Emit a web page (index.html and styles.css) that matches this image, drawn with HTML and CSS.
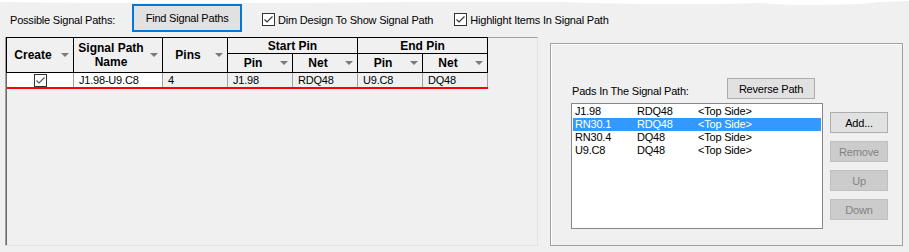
FILE: index.html
```html
<!DOCTYPE html>
<html lang="en">
<head>
    <meta charset="UTF-8">
    <title>Signal Paths</title>
    <link rel="stylesheet" href="styles.css">
</head>
<body>
    <svg class="torn-edge" width="909" height="6" viewBox="0 0 909 6">
        <polygon points="0,0 909,0 909,1 880,2 860,4 820,5 790,5 760,3 720,4 640,4 590,3 560,2 420,2 300,3 180,3 90,3 0,2" fill="#ffffff"/>
    </svg>

    <div class="toolbar">
        <span class="label">Possible Signal Paths:</span>
        <button class="btn btn-focus">Find Signal Paths</button>
        <label class="check first-check">
            <svg class="box" width="13" height="13" viewBox="0 0 13 13"><rect x="0.5" y="0.5" width="12" height="12" fill="#fff" stroke="#333"/><path d="M2.5 6.5 L5 9 L10.5 3.5" fill="none" stroke="#333" stroke-width="1.2"/></svg>
            <span>Dim Design To Show Signal Path</span>
        </label>
        <label class="check second-check">
            <svg class="box" width="13" height="13" viewBox="0 0 13 13"><rect x="0.5" y="0.5" width="12" height="12" fill="#fff" stroke="#333"/><path d="M2.5 6.5 L5 9 L10.5 3.5" fill="none" stroke="#333" stroke-width="1.2"/></svg>
            <span>Highlight Items In Signal Path</span>
        </label>
    </div>

    <div class="main">
        <div class="grid-panel">
            <table class="grid">
                <colgroup>
                    <col style="width: 67px">
                    <col style="width: 89px">
                    <col style="width: 65px">
                    <col style="width: 65px">
                    <col style="width: 65px">
                    <col style="width: 65px">
                    <col style="width: 65px">
                </colgroup>
                <thead>
                    <tr class="head-top">
                        <th rowspan="2"><div class="hcell"><span class="htext">Create</span><span class="arrow"></span></div></th>
                        <th rowspan="2"><div class="hcell"><span class="htext">Signal Path<br>Name</span><span class="arrow"></span></div></th>
                        <th rowspan="2"><div class="hcell"><span class="htext">Pins</span><span class="arrow"></span></div></th>
                        <th colspan="2" class="group">Start Pin</th>
                        <th colspan="2" class="group">End Pin</th>
                    </tr>
                    <tr class="head-sub">
                        <th><div class="hcell"><span class="htext">Pin</span><span class="arrow"></span></div></th>
                        <th><div class="hcell"><span class="htext">Net</span><span class="arrow"></span></div></th>
                        <th><div class="hcell"><span class="htext">Pin</span><span class="arrow"></span></div></th>
                        <th><div class="hcell"><span class="htext">Net</span><span class="arrow"></span></div></th>
                    </tr>
                </thead>
                <tbody>
                    <tr class="row">
                        <td class="cell-white cell-check">
                            <svg width="13" height="13" viewBox="0 0 13 13"><rect x="0.5" y="0.5" width="12" height="12" fill="#fff" stroke="#333"/><path d="M2.5 6.5 L5 9 L10.5 3.5" fill="none" stroke="#555" stroke-width="1.1"/></svg>
                        </td>
                        <td class="cell-white">J1.98-U9.C8</td>
                        <td>4</td>
                        <td>J1.98</td>
                        <td>RDQ48</td>
                        <td>U9.C8</td>
                        <td>DQ48</td>
                    </tr>
                </tbody>
            </table>
        </div>

        <div class="groupbox">
            <div class="pads-head">
                <span class="label">Pads In The Signal Path:</span>
                <button class="btn btn-reverse">Reverse Path</button>
            </div>
            <div class="pads-body">
                <div class="listbox">
                    <div class="item"><span>J1.98</span><span>RDQ48</span><span>&lt;Top Side&gt;</span></div>
                    <div class="item selected"><span>RN30.1</span><span>RDQ48</span><span>&lt;Top Side&gt;</span></div>
                    <div class="item"><span>RN30.4</span><span>DQ48</span><span>&lt;Top Side&gt;</span></div>
                    <div class="item"><span>U9.C8</span><span>DQ48</span><span>&lt;Top Side&gt;</span></div>
                </div>
                <div class="side-buttons">
                    <button class="btn btn-side">Add...</button>
                    <button class="btn btn-side" disabled>Remove</button>
                    <button class="btn btn-side" disabled>Up</button>
                    <button class="btn btn-side" disabled>Down</button>
                </div>
            </div>
        </div>
    </div>
</body>
</html>
```

FILE: styles.css
```css
body {
    margin: 0;
    background: #f0f0f0;
    font-family: "Liberation Sans", Arial, sans-serif;
    font-size: 11px;
    letter-spacing: -0.2px;
    color: #000;
    width: 909px;
    height: 252px;
    overflow: hidden;
    position: relative;
}
.torn-edge {
    position: absolute;
    top: 0;
    left: 0;
}
.btn {
    font-family: inherit;
    font-size: 11px;
    letter-spacing: -0.2px;
    color: #000;
    background: #e1e1e1;
    border: 1px solid #adadad;
    padding: 0;
    margin: 0;
    cursor: pointer;
}
.btn:disabled {
    background: #cccccc;
    border-color: #bfbfbf;
    color: #838383;
    cursor: default;
}

/* top bar */
.toolbar {
    height: 37px;
    display: flex;
    align-items: center;
    padding-left: 10px;
    box-sizing: border-box;
    padding-top: 2px;
}
.btn-focus {
    margin-left: 17px;
    width: 110px;
    height: 28px;
    border: 2px solid #0078d7;
    margin-top: -4px;
}
.check {
    display: flex;
    align-items: center;
    gap: 3px;
}
.check .box {
    display: block;
}
.first-check {
    margin-left: 20px;
}
.second-check {
    margin-left: 21px;
}

/* main area */
.main {
    display: flex;
    align-items: flex-start;
    padding-left: 5px;
}
.grid-panel {
    width: 533px;
    height: 209px;
    box-sizing: border-box;
    border-left: 1px solid #a0a0a0;
    border-top: 1px solid #a0a0a0;
    border-right: 1px solid #e3e3e3;
    border-bottom: 1px solid #e3e3e3;
    box-shadow: inset 1px 0 0 #696969;
}
.grid {
    border-collapse: collapse;
    table-layout: fixed;
    width: 481px;
    margin-top: -1px;
}
.grid th {
    border: 1px solid #000;
    padding: 0;
    font-weight: bold;
    font-size: 12px;
    letter-spacing: 0;
    background: #f0f0f0;
    line-height: 14px;
}
.head-top th {
    height: 15px;
}
.head-top th.group {
    text-align: center;
}
.head-sub th {
    height: 18px;
}
.hcell {
    display: flex;
    align-items: center;
}
.htext {
    flex: 1;
    text-align: center;
}
.arrow {
    width: 0;
    height: 0;
    border-left: 4px solid transparent;
    border-right: 4px solid transparent;
    border-top: 4px solid #7a7a7a;
    margin-right: 4px;
    margin-left: 2px;
}
.row td {
    height: 14px;
    padding: 0 0 0 5px;
    border-left: 1px solid #a0a0a0;
    border-right: 1px solid #a0a0a0;
    border-bottom: 2px solid #ff0000;
    white-space: nowrap;
    line-height: 14px;
    background: #f0f0f0;
}
.row td.cell-white {
    background: #fff;
}
.row td.cell-check {
    text-align: center;
    padding: 0;
    border-left: none;
}
.cell-check svg {
    display: block;
    margin: 0 auto;
    position: relative;
    left: 1px;
}

/* right group */
.groupbox {
    margin-left: 12px;
    margin-top: 6px;
    width: 353px;
    height: 203px;
    box-sizing: border-box;
    border: 1px solid #a0a0a0;
    box-shadow: inset 1px 1px 0 #fff;
    padding: 34px 0 0 20px;
}
.pads-head {
    width: 252px;
    display: flex;
    align-items: center;
    height: 21px;
}
.pads-head .label {
    margin-left: 1px;
    margin-top: 4px;
}
.btn-reverse {
    margin-left: auto;
    margin-right: 8px;
    width: 88px;
    height: 21px;
}
.pads-body {
    display: flex;
    margin-top: 4px;
}
.listbox {
    width: 252px;
    height: 126px;
    box-sizing: border-box;
    border: 1px solid #828790;
    background: #fff;
    padding: 1px;
}
.item {
    display: grid;
    grid-template-columns: 62px 61px auto;
    height: 13px;
    line-height: 13px;
    padding-left: 2px;
    white-space: nowrap;
}
.item.selected {
    background: #3399ff;
    color: #fff;
}
.side-buttons {
    display: flex;
    flex-direction: column;
    gap: 8px;
    margin-left: 7px;
    margin-top: 9px;
}
.btn-side {
    width: 58px;
    height: 21px;
}
```
